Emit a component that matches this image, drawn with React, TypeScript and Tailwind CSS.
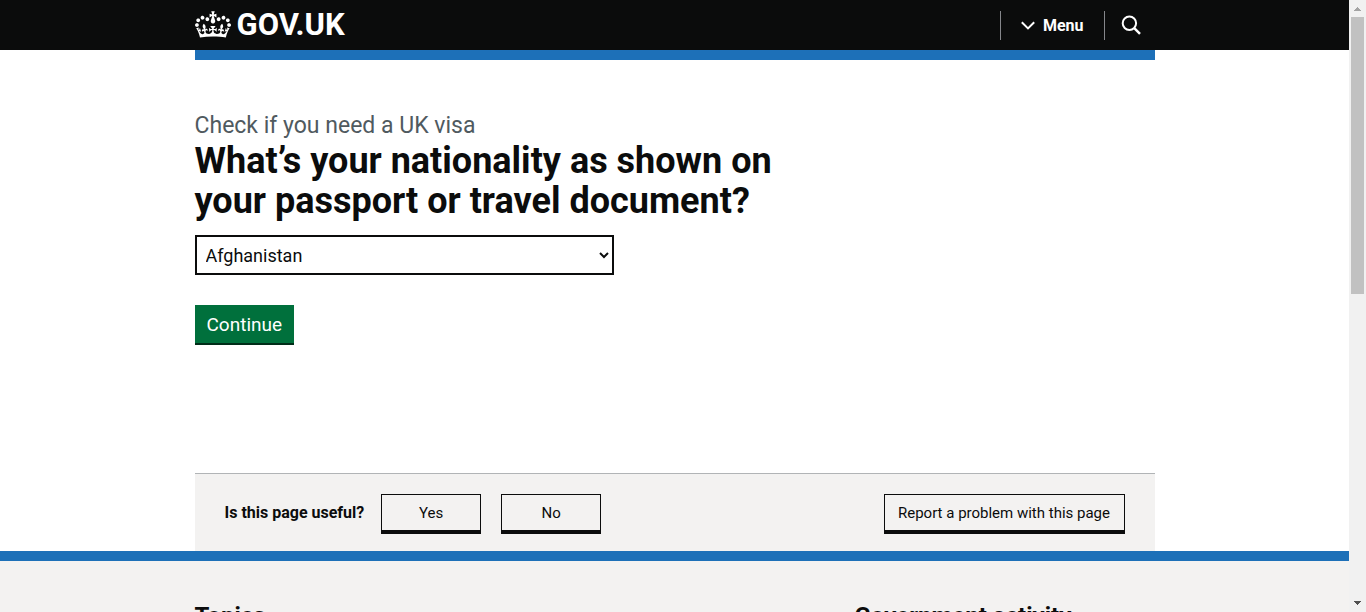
import type { ReactNode } from "react";

const crownPath =
  "M25 30.2c3.5 1.5 7.7-.2 9.1-3.7 1.5-3.6-.2-7.8-3.9-9.2-3.6-1.4-7.6.3-9.1 3.9-1.4 3.5.3 7.5 3.9 9zM9 39.5c3.6 1.5 7.8-.2 9.2-3.7 1.5-3.6-.2-7.8-3.9-9.1-3.6-1.5-7.6.2-9.1 3.8-1.4 3.5.3 7.5 3.8 9zM4.4 57.2c3.5 1.5 7.7-.2 9.1-3.8 1.5-3.6-.2-7.7-3.9-9.1-3.5-1.5-7.6.3-9.1 3.8-1.4 3.5.3 7.6 3.9 9.1zm38.3-21.4c3.5 1.5 7.7-.2 9.1-3.8 1.5-3.6-.2-7.7-3.9-9.1-3.6-1.5-7.6.3-9.1 3.8-1.3 3.6.4 7.7 3.9 9.1zm64.4-5.6c-3.6 1.5-7.8-.2-9.1-3.7-1.5-3.6.2-7.8 3.8-9.2 3.6-1.4 7.7.3 9.2 3.9 1.3 3.5-.4 7.5-3.9 9zm15.9 9.3c-3.6 1.5-7.7-.2-9.1-3.7-1.5-3.6.2-7.8 3.7-9.1 3.6-1.5 7.7.2 9.2 3.8 1.5 3.5-.3 7.5-3.8 9zm4.7 17.7c-3.6 1.5-7.8-.2-9.2-3.8-1.5-3.6.2-7.7 3.9-9.1 3.6-1.5 7.7.3 9.2 3.8 1.3 3.5-.4 7.6-3.9 9.1zM89.3 35.8c-3.6 1.5-7.8-.2-9.2-3.8-1.4-3.6.2-7.7 3.9-9.1 3.6-1.5 7.7.3 9.2 3.8 1.4 3.6-.3 7.7-3.9 9.1zM69.7 17.7l8.9 4.7V9.3l-8.9 2.8c-.2-.3-.5-.6-.9-.9L72.4 0H59.6l3.5 11.2c-.3.3-.6.5-.9.9l-8.8-2.8v13.1l8.8-4.7c.3.3.6.7.9.9l-5 15.4v.1c-.2.8-.4 1.6-.4 2.4 0 4.1 3.1 7.5 7 8.1h.2c.3 0 .7.1 1 .1.4 0 .7 0 1-.1h.2c4-.6 7.1-4.1 7.1-8.1 0-.8-.1-1.7-.4-2.4V34l-5.1-15.4c.4-.2.7-.6 1-.9zM66 92.8c16.9 0 32.8 1.1 47.1 3.2 4-16.9 8.9-26.7 14-33.5l-9.6-3.4c1 4.9 1.1 7.2 0 10.2-1.5-1.4-3-4.3-4.2-8.7L108.6 76c2.8-2 5-3.2 7.5-3.3-4.4 9.4-10 11.9-13.6 11.2-4.3-.8-6.3-4.6-5.6-7.9 1-4.7 5.7-5.9 8-.5 4.3-8.7-3-11.4-7.6-8.8 7.1-7.2 7.9-13.5 2.1-21.1-8 6.1-8.1 12.3-4.5 20.8-4.7-5.4-12.1-2.5-9.5 6.2 3.4-5.2 7.9-2 7.2 3.1-.6 4.3-6.4 7.8-13.5 7.2-10.3-.9-10.9-8-11.2-13.8 2.5-.5 7.1 1.8 11 7.3L80.2 60c-4.1 4.4-8 5.3-12.3 5.4 1.4-4.4 8-11.6 8-11.6H55.5s6.4 7.2 7.9 11.6c-4.2-.1-8-1-12.3-5.4l1.4 16.4c3.9-5.5 8.5-7.7 10.9-7.3-.3 5.8-.9 12.8-11.1 13.8-7.2.6-12.9-2.9-13.5-7.2-.7-5 3.8-8.3 7.1-3.1 2.7-8.7-4.6-11.6-9.4-6.2 3.7-8.5 3.6-14.7-4.6-20.8-5.8 7.6-5 13.9 2.2 21.1-4.7-2.6-11.9.1-7.7 8.8 2.3-5.5 7.1-4.2 8.1.5.7 3.3-1.3 7.1-5.7 7.9-3.5.7-9-1.8-13.5-11.2 2.5.1 4.7 1.3 7.5 3.3l-4.7-15.4c-1.2 4.4-2.7 7.2-4.3 8.7-1.1-3-.9-5.3 0-10.2l-9.5 3.4c5 6.9 9.9 16.7 14 33.5 14.8-2.1 30.8-3.2 47.7-3.2z";

function Container({ children }: { children: ReactNode }) {
  return <div className="mx-auto w-full max-w-[960px]">{children}</div>;
}

function Header() {
  return (
    <header className="bg-[#0b0c0c]">
      <Container>
        <div className="flex h-[50px] items-center justify-between text-white">
          <a href="#home" className="flex items-start gap-1.5 text-[31px] leading-7 font-bold">
            <svg viewBox="0 0 132 97" className="h-[27px] w-9" fill="currentColor" fillRule="evenodd" aria-hidden="true">
              <path d={crownPath} />
            </svg>
            GOV.UK
          </a>
          <div className="flex h-[29px] items-center">
            <button
              type="button"
              className="flex h-full items-center gap-2 border-x border-[#85878b] px-5 pt-px text-base font-bold"
            >
              <svg viewBox="0 0 14 9" className="h-[9px] w-[14px]" fill="none" stroke="currentColor" strokeWidth="2" aria-hidden="true">
                <path d="M.8 1.2 7 7.4l6.200-6.200" />
              </svg>
              Menu
            </button>
            <button type="button" aria-label="Search GOV.UK" className="flex h-full w-[50px] items-center pl-4">
              <svg viewBox="0 0 20 20" className="size-5" fill="none" stroke="currentColor" strokeWidth="2" aria-hidden="true">
                <circle cx="8.400" cy="8.200" r="6.700" />
                <path d="m13 12.800 6 6" strokeWidth="2.400" />
              </svg>
            </button>
          </div>
        </div>
      </Container>
    </header>
  );
}

function NationalityForm() {
  return (
    <form className="flex h-[413px] flex-col items-start pt-[51px]" onSubmit={(e) => e.preventDefault()}>
      <h1>
        <span className="block text-[23px] leading-[29px] text-[#505a5f]">Check if you need a UK visa</span>
        <label htmlFor="nationality" className="block max-w-[620px] pt-px text-4xl leading-10 font-bold">
          What’s your nationality as shown on your passport or travel document?
        </label>
      </h1>
      <select
        id="nationality"
        defaultValue="Afghanistan"
        className="mt-3.5 h-10 w-[419px] max-w-full border-2 border-[#0b0c0c] bg-white p-[5px] text-lg leading-6"
      >
        <option>Afghanistan</option>
        <option>Albania</option>
        <option>Algeria</option>
      </select>
      <button
        type="submit"
        className="mt-[30px] h-10 border-b-2 border-[#002d18] bg-[#00703c] px-3 text-[19px] leading-none text-white"
      >
        Continue
      </button>
    </form>
  );
}

const feedbackButton = "h-10 border border-b-4 border-[#0b0c0c] bg-[#f3f2f1] pt-0.5 text-[15px]";

function Feedback() {
  return (
    <section className="flex h-[78px] items-start justify-between border-t border-[#b1b4b6] bg-[#f3f2f1] px-[30px] pt-5">
      <div className="flex items-center gap-[17px]">
        <h2 className="pb-0.5 text-base font-bold">Is this page useful?</h2>
        <div className="flex gap-5">
          <button type="button" className={`${feedbackButton} w-[100px]`}>Yes</button>
          <button type="button" className={`${feedbackButton} w-[100px]`}>No</button>
        </div>
      </div>
      <button type="button" className={`${feedbackButton} w-[241px]`}>Report a problem with this page</button>
    </section>
  );
}

function Scrollbar() {
  return (
    <div className="flex w-[17px] shrink-0 flex-col items-center justify-between bg-[#f1f1f1]" aria-hidden="true">
      <div className="flex flex-col items-center">
        <svg viewBox="0 0 17 17" className="size-[17px]" fill="#a3a3a3" shapeRendering="crispEdges">
          <path d="M8 7h1v1h1v1h1v1h1v1H5v-1h1V9h1V8h1z" />
        </svg>
        <div className="h-[277px] w-[13px] bg-[#c1c1c1]" />
      </div>
      <svg viewBox="0 0 17 17" className="size-[17px]" fill="#505050" shapeRendering="crispEdges">
        <path d="M5 6h7v1h-1v1h-1v1H9v1H8V9H7V8H6V7H5z" />
      </svg>
    </div>
  );
}

export default function App() {
  return (
    <div className="flex h-screen bg-white font-['Roboto',sans-serif] text-[#0b0c0c]">
      <div className="min-w-0 flex-1 overflow-hidden">
        <Header />
        <Container>
          <div className="h-2.5 bg-[#1d70b8]" />
          <main>
            <NationalityForm />
          </main>
          <Feedback />
        </Container>
        <footer className="border-t-10 border-[#1d70b8] bg-[#f3f2f1] pt-10 pb-10">
          <Container>
            <div className="grid grid-cols-[660px_1fr]">
              <h2 className="text-2xl leading-[30px] font-bold">Topics</h2>
              <h2 className="text-2xl leading-[30px] font-bold">Government activity</h2>
            </div>
          </Container>
        </footer>
      </div>
      <Scrollbar />
    </div>
  );
}
